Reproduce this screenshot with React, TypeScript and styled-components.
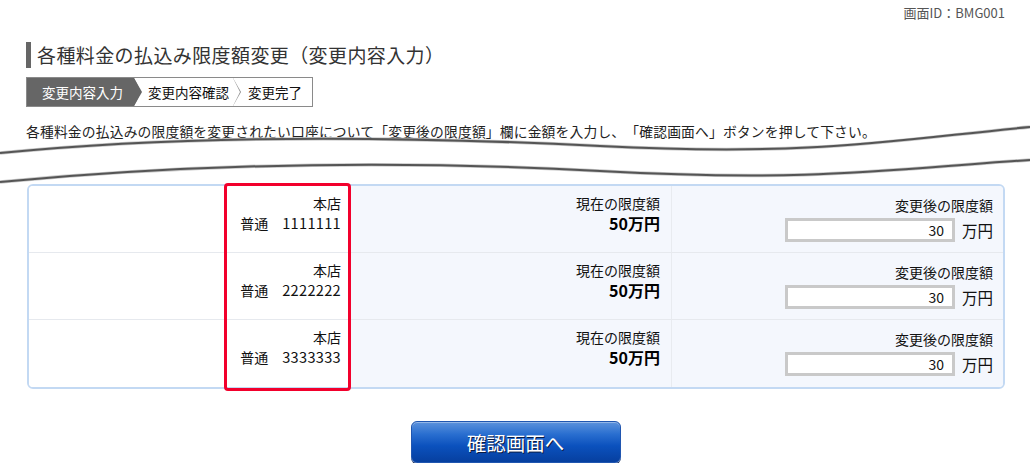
import React from 'react'
import styled, { createGlobalStyle } from 'styled-components'

const GlobalStyle = createGlobalStyle`
  body {
    margin: 0;
    background: #fff;
    color: #222;
    font-family: "Noto Sans CJK JP", "Noto Sans", sans-serif;
    text-spacing-trim: space-all;
  }
`

const Page = styled.div`
  width: 1030px;
  box-sizing: border-box;
  padding: 0 25px 0 26px;
`

const ScreenId = styled.div`
  padding-top: 3px;
  text-align: right;
  font-size: 13px;
  line-height: 20px;
  color: #555;
`

const Title = styled.h1`
  margin: 19px 0 0;
  border-left: 5px solid #666;
  padding-left: 6px;
  font-size: 19px;
  line-height: 26px;
  letter-spacing: 0.4px;
  font-weight: normal;
  color: #333;
`

const Steps = styled.div`
  display: inline-flex;
  margin-top: 9px;
  height: 30px;
  box-sizing: border-box;
  border: 1px solid #8a8a8a;
  font-size: 13.5px;
`

const Step = styled.div<{ $active?: boolean; $last?: boolean; $pad: string }>`
  position: relative;
  display: flex;
  align-items: center;
  padding: ${p => p.$pad};
  background: ${p => (p.$active ? '#666' : '#fff')};
  color: ${p => (p.$active ? '#fff' : '#111')};

  &::before,
  &::after {
    content: '';
    display: ${p => (p.$last ? 'none' : 'block')};
    position: absolute;
    top: 0;
    bottom: 0;
    clip-path: polygon(0 0, 100% 50%, 0 100%);
    z-index: 1;
  }
  &::before {
    right: -8px;
    width: 8px;
    background: ${p => (p.$active ? '#666' : '#8a8a8a')};
  }
  &::after {
    right: -7px;
    width: 7px;
    background: ${p => (p.$active ? '#666' : '#fff')};
  }
`

const Lead = styled.p`
  margin: 14px 0 0;
  font-size: 13.8px;
  line-height: 20px;
  letter-spacing: 0.15px;
  color: #222;
`

const Wave = styled.svg`
  display: block;
  margin: 0 -25px 0 -26px;
  overflow: visible;
`

const TableWrap = styled.div`
  position: relative;
  margin-left: 1px;
  border: 2px solid #c3d9f3;
  border-radius: 6px;
`

const Grid = styled.div`
  display: grid;
  grid-template-columns: 194px 128px 321px 1fr;
  border-radius: 4px;
  overflow: hidden;
`

const Cell = styled.div<{ $tone: 'white' | 'blue'; $last?: boolean; $divider?: boolean }>`
  box-sizing: border-box;
  height: 67px;
  background: ${p => (p.$tone === 'white' ? '#fff' : '#f4f7fd')};
  border-bottom: ${p => (p.$last ? 'none' : '1px solid #e6e9ee')};
  border-right: ${p => (p.$divider ? '1px solid #e8ebf0' : 'none')};
  text-align: right;
`

const Branch = styled.div`
  padding: 8px 10px 0 0;
  font-size: 14px;
  line-height: 19px;
  color: #111;
`

const AccountNo = styled.span`
  font-size: 14.6px;
  letter-spacing: 0.3px;
`

const Current = styled.div`
  padding: 8px 11px 0 0;
  font-size: 14px;
  line-height: 19px;
  color: #111;
`

const Amount = styled.div`
  font-size: 16px;
  font-weight: bold;
  line-height: 20px;
  color: #000;
`

const NewLimit = styled.div`
  padding: 10px 10px 0 0;
  font-size: 14px;
  line-height: 18px;
  color: #111;
`

const InputRow = styled.div`
  display: flex;
  justify-content: flex-end;
  align-items: center;
  gap: 7px;
  margin-top: 4px;
`

const AmountInput = styled.input`
  width: 170px;
  height: 24px;
  box-sizing: border-box;
  border: 3px solid #c9c9c9;
  padding: 0 8px 0 4px;
  text-align: right;
  font-family: "Noto Sans CJK JP", "Noto Sans", sans-serif;
  font-size: 14px;
  color: #111;
  background: #fff;
  outline: none;
`

const Unit = styled.span`
  font-size: 15.5px;
  color: #111;
`

const Highlight = styled.div`
  position: absolute;
  left: 195px;
  top: -3px;
  bottom: -4px;
  width: 127px;
  box-sizing: border-box;
  border: 3px solid #f2002c;
  border-radius: 4px;
  pointer-events: none;
`

const Actions = styled.div`
  display: flex;
  justify-content: center;
  margin-top: 32px;
`

const SubmitButton = styled.button`
  width: 210px;
  height: 42px;
  border: 1px solid #2056b0;
  border-radius: 6px;
  background: linear-gradient(to bottom, #5c92dc 0%, #2a6fd0 30%, #0b51bd 60%, #063f9f 100%);
  box-shadow: inset 0 1px 0 rgba(255, 255, 255, 0.35), 0 1px 0 #0b2458;
  color: #fff;
  font-family: "Noto Sans CJK JP", "Noto Sans", sans-serif;
  font-size: 19.5px;
  text-shadow: 1px 1px 0 #0a1a40;
  cursor: pointer;
`

const accounts = ['1111111', '2222222', '3333333']

const App = () => {
  return (
    <>
      <GlobalStyle />
      <Page>
        <ScreenId>画面ID：BMG001</ScreenId>
        <Title>各種料金の払込み限度額変更（変更内容入力）</Title>
        <Steps>
          <Step $active $pad="0 11px 0 15px">変更内容入力</Step>
          <Step $pad="0 4px 0 14px">変更内容確認</Step>
          <Step $last $pad="0 10px 0 15px">変更完了</Step>
        </Steps>
        <Lead>
          各種料金の払込みの限度額を変更されたい口座について「変更後の限度額」欄に金額を入力し、「確認画面へ」ボタンを押して下さい。
        </Lead>
        <Wave width="1030" height="43" viewBox="0 0 1030 43">
          <path d="M0 12 C 180 -6, 380 -6, 600 5 S 900 -2, 1030 -14" fill="none" stroke="#c8c8c8" strokeWidth="3.5" />
          <path d="M0 12 C 180 -6, 380 -6, 600 5 S 900 -2, 1030 -14" fill="none" stroke="#555" strokeWidth="2" />
          <path d="M0 41 C 180 24, 380 18, 600 30 S 900 27, 1030 19" fill="none" stroke="#c8c8c8" strokeWidth="3.5" />
          <path d="M0 41 C 180 24, 380 18, 600 30 S 900 27, 1030 19" fill="none" stroke="#555" strokeWidth="2" />
        </Wave>
        <TableWrap>
          <Grid>
            {accounts.map((no, i) => {
              const last = i === accounts.length - 1
              return (
                <React.Fragment key={no}>
                  <Cell $tone="white" $last={last} />
                  <Cell $tone="white" $last={last}>
                    <Branch>
                      本店
                      <br />
                      普通　<AccountNo>{no}</AccountNo>
                    </Branch>
                  </Cell>
                  <Cell $tone="blue" $last={last} $divider>
                    <Current>
                      現在の限度額
                      <Amount>50万円</Amount>
                    </Current>
                  </Cell>
                  <Cell $tone="blue" $last={last}>
                    <NewLimit>
                      変更後の限度額
                      <InputRow>
                        <AmountInput defaultValue="30" />
                        <Unit>万円</Unit>
                      </InputRow>
                    </NewLimit>
                  </Cell>
                </React.Fragment>
              )
            })}
          </Grid>
          <Highlight />
        </TableWrap>
        <Actions>
          <SubmitButton>確認画面へ</SubmitButton>
        </Actions>
      </Page>
    </>
  )
}

export default App
